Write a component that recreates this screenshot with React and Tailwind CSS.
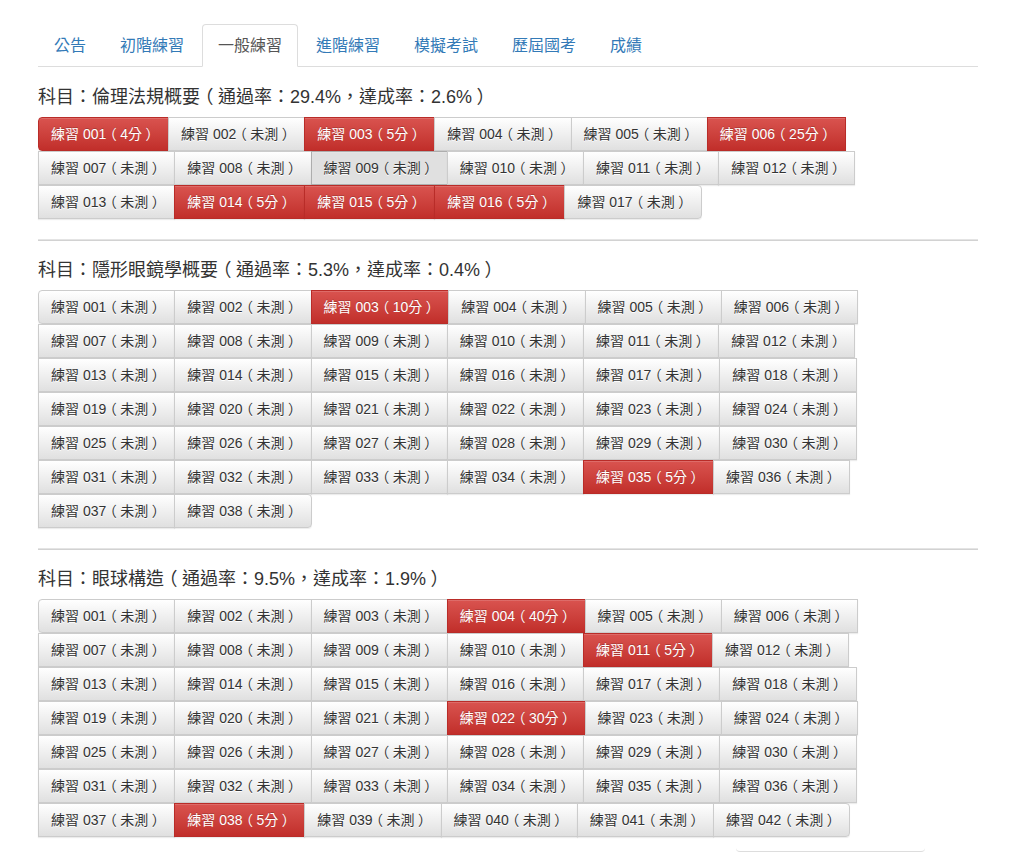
import React from "react";

const tabs = ["公告", "初階練習", "一般練習", "進階練習", "模擬考試", "歷屆國考", "成績"];

const subjects = [
  { name: "倫理法規概要", pass: "29.4%", reach: "2.6%", count: 17, scores: { 1: 4, 3: 5, 6: 25, 14: 5, 15: 5, 16: 5 }, focus: 9 },
  { name: "隱形眼鏡學概要", pass: "5.3%", reach: "0.4%", count: 38, scores: { 3: 10, 35: 5 } },
  { name: "眼球構造", pass: "9.5%", reach: "1.9%", count: 42, scores: { 4: 40, 11: 5, 22: 30, 38: 5 } },
];

// 全形括號：用半形寬度字形加左右留白，讓括號置中
function Paren({ children, big }) {
  return (
    <span className={`[font-feature-settings:'halt'] ${big ? "px-[4.5px]" : "px-[3.5px]"}`}>{children}</span>
  );
}

function PracticeButton({ n, score, first, last, focus }) {
  const num = String(n).padStart(3, "0");
  const danger = score !== undefined;
  let look =
    "bg-linear-to-b from-white to-[#e0e0e0] border-[#ccc] text-[#333] [text-shadow:0_1px_0_#fff]";
  if (danger) {
    look =
      "bg-linear-to-b from-[#d9534f] to-[#c12e2a] border-[#b92c28] text-white [text-shadow:0_-1px_0_rgba(0,0,0,.2)]";
  } else if (focus) {
    look = "bg-[#e0e0e0] border-[#adadad] text-[#333] [text-shadow:0_1px_0_#fff]";
  }
  return (
    <button
      className={`-ml-px h-[34px] border px-3 text-[14px] leading-[20px] whitespace-nowrap shadow-[inset_0_1px_0_rgba(255,255,255,.15),0_1px_1px_rgba(0,0,0,.075)] ${look} ${
        first ? "rounded-l-[4px]" : ""
      } ${last ? "rounded-r-[4px]" : ""}`}
    >
      練習 {num}
      <Paren>（</Paren>
      {danger ? `${score}分` : "未測"}
      <Paren>）</Paren>
    </button>
  );
}

function Subject({ subject, afterRule }) {
  const items = Array.from({ length: subject.count }, (_, i) => i + 1);
  return (
    <div>
      <div
        className={`${afterRule ? "mt-[19px]" : "mt-5"} mb-[10px] h-[20px] text-[18px] leading-[20px] text-[#333]`}
      >
        科目：{subject.name}
        <Paren big>（</Paren>
        通過率：{subject.pass}，達成率：{subject.reach}
        <Paren big>）</Paren>
      </div>
      <div className="flex flex-wrap pl-px">
        {items.map((n) => (
          <PracticeButton
            key={n}
            n={n}
            score={subject.scores[n]}
            first={n === 1}
            last={n === subject.count}
            focus={subject.focus === n}
          />
        ))}
      </div>
    </div>
  );
}

export default function App() {
  return (
    <div
      className="relative min-h-[861px] bg-white"
      style={{ fontFamily: '"Liberation Sans", "Noto Sans CJK TC", sans-serif' }}
    >
      <div className="ml-[38px] w-[940px] pt-6">
        {/* 分頁 */}
        <ul className="flex border-b border-[#ddd] text-[16px]">
          {tabs.map((t) => {
            const active = t === "一般練習";
            return (
              <li key={t} className="-mb-px mr-[2px]">
                <a
                  className={`block h-[43px] rounded-t-[4px] border px-[15px] pt-[10px] leading-[22px] ${
                    active
                      ? "border-[#ddd] border-b-white bg-white text-[#555]"
                      : "border-transparent text-[#337ab7]"
                  }`}
                >
                  {t}
                </a>
              </li>
            );
          })}
        </ul>

        {subjects.map((s, i) => (
          <div key={s.name}>
            {i > 0 && <div className="mt-5 h-[2px] border-t border-b border-t-[#e4e4e4] border-b-[#d2d2d2]" />}
            <Subject subject={s} afterRule={i > 0} />
          </div>
        ))}
      </div>

      <div className="absolute left-[736px] top-[838px] h-[14px] w-[189px] rounded-b-[4px] border-b border-[#ddd]" />
    </div>
  );
}
